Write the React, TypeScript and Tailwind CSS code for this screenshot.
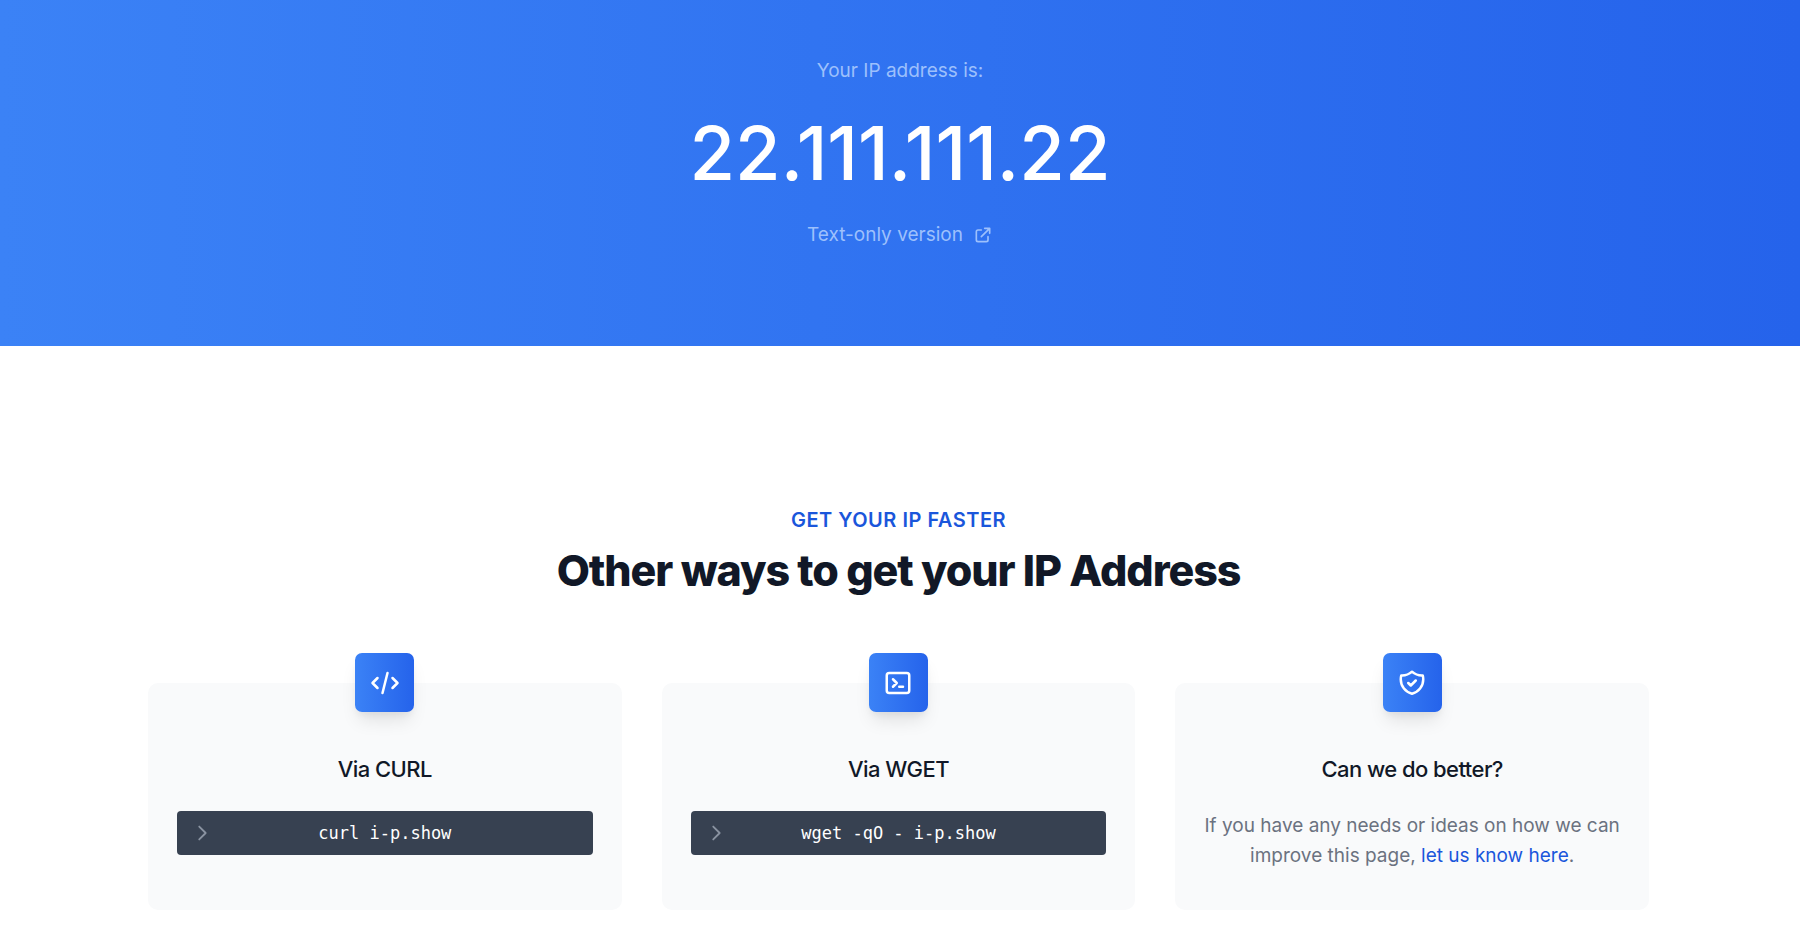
import type { ReactNode } from 'react';

const ICONS = {
  code: 'M10 20l4-16m4 4l4 4-4 4M6 16l-4-4 4-4',
  terminal:
    'M8 9l3 3-3 3m5 0h3M5 20h14a2 2 0 002-2V6a2 2 0 00-2-2H5a2 2 0 00-2 2v12a2 2 0 002 2z',
  shield:
    'M9 12l2 2 4-4m5.618-4.016A11.955 11.955 0 0112 2.944a11.955 11.955 0 01-8.618 3.04A12.02 12.02 0 003 9c0 5.591 3.824 10.29 9 11.622 5.176-1.332 9-6.03 9-11.622 0-1.042-.133-2.052-.382-3.016z',
  external: 'M10 6H6a2 2 0 00-2 2v10a2 2 0 002 2h10a2 2 0 002-2v-4M14 4h6m0 0v6m0-6L10 14',
  chevron: 'M9 5l7 7-7 7',
};

function Icon({ name, className }: { name: keyof typeof ICONS; className: string }) {
  return (
    <svg
      className={className}
      viewBox="0 0 24 24"
      fill="none"
      stroke="currentColor"
      strokeWidth={2}
      strokeLinecap="round"
      strokeLinejoin="round"
      aria-hidden="true"
    >
      <path d={ICONS[name]} />
    </svg>
  );
}

function Card({
  icon,
  title,
  children,
}: {
  icon: keyof typeof ICONS;
  title: string;
  children: ReactNode;
}) {
  return (
    <article className="rounded-[10px] bg-[#f9fafb] px-[29px] pb-[39px]">
      <div className="mx-auto -mt-[30px] flex size-[59px] items-center justify-center rounded-[7px] bg-linear-to-r/srgb from-[#3b82f6] to-[#2563eb] text-white shadow-[0_12px_18px_-4px_rgba(0,0,0,0.1),0_5px_7px_-2px_rgba(0,0,0,0.05)]">
        <Icon name={icon} className="size-[30px]" />
      </div>
      <h3 className="mt-[39px] text-center text-[22px] leading-9 font-medium tracking-tight text-[#111827]">
        {title}
      </h3>
      {children}
    </article>
  );
}

function Command({ children }: { children: string }) {
  return (
    <div className="relative mt-6 rounded bg-[#374151] py-2 text-center text-white">
      <Icon
        name="chevron"
        className="absolute top-[11px] left-3.5 size-[22px] text-[#8a93a1]"
      />
      <code className="block font-['DejaVu_Sans_Mono',monospace] text-[17px] leading-7">{children}</code>
    </div>
  );
}

export default function App() {
  return (
    <main className="min-h-screen bg-white font-[Inter,sans-serif] text-[19px]">
      <section className="flex flex-col items-center bg-linear-to-r/srgb from-[#3b82f6] to-[#2563eb] px-8 pt-14 pb-24 text-center leading-[30px] text-[#9dc0fc]">
        <p>Your IP address is:</p>
        <h1 className="my-[30px] text-[74px] leading-[74px] font-medium text-white">
          22.111.111.22
        </h1>
        <a href="#text" className="flex items-center gap-2.5">
          Text-only version
          <Icon name="external" className="size-5" />
        </a>
      </section>

      <section className="mx-auto max-w-[1564px] pt-[159px] pr-[33px] pb-9 pl-[30px]">
        <header className="text-center">
          <h2 className="text-[20px] leading-[30px] font-semibold tracking-wide text-[#1a56db] uppercase">
            Get your IP faster
          </h2>
          <p className="mt-2.5 text-[43px] leading-[50px] font-extrabold tracking-tight text-[#111827]">
            Other ways to get your IP Address
          </p>
        </header>
        <div className="mt-[88px] grid grid-cols-3 gap-10">
          <Card icon="code" title="Via CURL">
            <Command>curl i-p.show</Command>
          </Card>
          <Card icon="terminal" title="Via WGET">
            <Command>wget -qO - i-p.show</Command>
          </Card>
          <Card icon="shield" title="Can we do better?">
            <p className="-mx-2 mt-6 text-center leading-[30px] text-[#6b7280]">
              If you have any needs or ideas on how we can improve this page,{' '}
              <a href="#contact" className="text-[#1a56db]">
                let us know here
              </a>
              .
            </p>
          </Card>
        </div>
      </section>
    </main>
  );
}
